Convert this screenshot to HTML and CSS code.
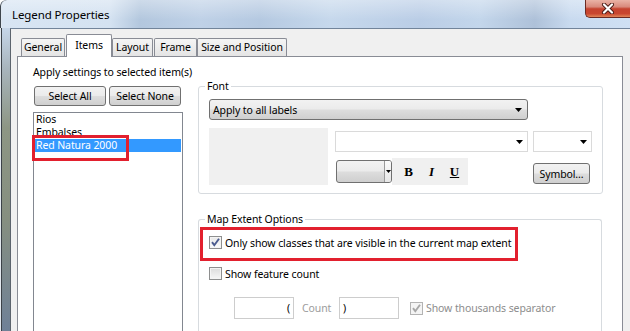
FILE: index.html
```html
<!DOCTYPE html>
<html lang="en">
<head>
    <meta charset="utf-8">
    <link rel="stylesheet" href="styles.css">
    <title>Legend Properties</title>
</head>
<body>
<div class="window">
    <header class="titlebar">
        <span class="title">Legend Properties</span>
        <button class="close">
            <svg width="14" height="11" viewBox="0 0 14 11">
                <path d="M3 1.5 L11 9.5 M11 1.5 L3 9.5" stroke="#4a1c16" stroke-width="4" stroke-linecap="round"/>
                <path d="M3 1.5 L11 9.5 M11 1.5 L3 9.5" stroke="#fff" stroke-width="2.2" stroke-linecap="round"/>
            </svg>
        </button>
    </header>
    <div class="frameBody">
        <div class="frameLeft"></div>
        <div class="client">
            <nav class="tabs">
                <div class="tab tabGeneral">General</div>
                <div class="tab tabItems active">Items</div>
                <div class="tab tabLayout">Layout</div>
                <div class="tab tabFrame">Frame</div>
                <div class="tab tabSize">Size and Position</div>
            </nav>
            <main class="panel">
                <section class="itemsCol">
                    <div class="caption">Apply settings to selected item(s)</div>
                    <div class="btnRow">
                        <button class="btn btnSelect">Select All</button>
                        <button class="btn btnSelect">Select None</button>
                    </div>
                    <div class="list">
                        <div class="listItem">Rios</div>
                        <div class="listItem">Embalses</div>
                        <div class="listItem selected">Red Natura 2000</div>
                        <div class="mark markList"></div>
                    </div>
                </section>

                <section class="propsCol">
                    <fieldset class="group groupFont">
                        <legend>Font</legend>
                        <div class="combo comboApply">
                            <span>Apply to all labels</span>
                            <svg class="arrow" width="7" height="4" viewBox="0 0 7 4"><path d="M0 0h7L3.5 4z"/></svg>
                        </div>
                        <div class="fontRow">
                            <div class="preview"></div>
                            <div class="fontControls">
                                <div class="comboRow">
                                    <div class="field comboName">
                                        <svg class="arrow" width="7" height="4" viewBox="0 0 7 4"><path d="M0 0h7L3.5 4z"/></svg>
                                    </div>
                                    <div class="field comboSize">
                                        <svg class="arrow" width="7" height="4" viewBox="0 0 7 4"><path d="M0 0h7L3.5 4z"/></svg>
                                    </div>
                                </div>
                                <div class="styleRow">
                                    <div class="colorBtn">
                                        <span class="colorFace"></span>
                                        <span class="colorDrop">
                                            <svg width="5" height="3" viewBox="0 0 5 3"><path d="M0 0h5L2.5 3z"/></svg>
                                        </span>
                                    </div>
                                    <div class="biu">
                                        <span class="bold">B</span>
                                        <span class="italic">I</span>
                                        <span class="under">U</span>
                                    </div>
                                    <button class="btn btnSymbol">Symbol...</button>
                                </div>
                            </div>
                        </div>
                    </fieldset>

                    <fieldset class="group groupExtent">
                        <legend>Map Extent Options</legend>
                        <div class="checkRow rowVisible">
                            <span class="check checked">
                                <svg width="11" height="11" viewBox="0 0 11 11"><path d="M2 5.2 L4.3 8.2 L9 1.8" fill="none" stroke="#4b5b8e" stroke-width="1.9"/></svg>
                            </span>
                            <span>Only show classes that are visible in the current map extent</span>
                            <div class="mark markVisible"></div>
                        </div>
                        <div class="checkRow rowCount">
                            <span class="check"></span>
                            <span>Show feature count</span>
                        </div>
                        <div class="countRow">
                            <div class="countBox boxPrefix">(</div>
                            <span class="countLabel">Count</span>
                            <div class="countBox boxSuffix">)</div>
                            <div class="checkRow disabled">
                                <span class="check checked">
                                    <svg width="11" height="11" viewBox="0 0 11 11"><path d="M2 5.2 L4.3 8.2 L9 1.8" fill="none" stroke="#a7a7a7" stroke-width="1.9"/></svg>
                                </span>
                                <span>Show thousands separator</span>
                            </div>
                        </div>
                    </fieldset>
                </section>
            </main>
        </div>
    </div>
</div>
</body>
</html>
```

FILE: styles.css
```css
* { box-sizing: border-box; }
html, body { width: 630px; height: 331px; margin: 0; padding: 0; overflow: hidden; font-family: "Noto Sans", sans-serif; font-size: 10.5px; letter-spacing: -0.1px; color: #000; }
button { font: inherit; letter-spacing: inherit; color: inherit; padding: 0; }

/* window frame */
.window { display: flex; flex-direction: column; height: 331px; }
.titlebar { height: 28px; display: flex; align-items: flex-start; border-top-left-radius: 6px; box-shadow: inset 1px 0 0 #3f464d, inset 2px 0 0 #dfe8f2;
    background: linear-gradient(180deg, rgba(255,255,255,.35), rgba(255,255,255,0) 70%),
                linear-gradient(90deg, #d8e5f3 0, #d4e2f1 110px, #b3c7de 140px, #bfd1e7 200px, #b5c9e1 260px, #c6d8ec 330px, #bacde6 420px, #c3d6eb 480px, #aec1d9 535px, #c8daef 570px, #cfe0f3 630px); }
.title { padding: 7px 0 0 12px; font-size: 11.5px; letter-spacing: -0.1px; line-height: 16px; }
.close { margin-left: auto; width: 45px; height: 18px; display: flex; align-items: center; justify-content: center; border: 1px solid #6b2a22; border-top: none; border-right: none; border-bottom-left-radius: 5px;
    background: linear-gradient(180deg, #eab3a6 0, #d98a7c 40%, #c5432f 52%, #c9462f 80%, #e18556 100%); }

.frameBody { flex: 1; display: flex; min-height: 0; }
.frameLeft { width: 10px; box-shadow: inset 1px 0 0 #e3e9ef, inset 2px 0 0 #3c4248;
    background: linear-gradient(180deg, #c6d6e8 0, #a8b5bd 40px, #8d9684 100px, #868f80 190px, #6f8197 302px); }
.client { flex: 1; min-width: 0; display: flex; flex-direction: column; padding-top: 5px; background: #f0f0f0; border-top: 1px solid #72849a; border-left: 1px solid #5c646d; }

/* tabs */
.tabs { display: flex; align-items: flex-end; height: 22px; padding-left: 10px; position: relative; z-index: 1; }
.tab { height: 18px; line-height: 17px; text-align: center; border: 1px solid #898c95; border-bottom: none; border-radius: 2px 2px 0 0; background: linear-gradient(180deg, #f5f5f5, #e4e4e4); }
.tab.active { height: 23px; line-height: 20px; margin-bottom: -1px; background: #fff; }
.tabGeneral { width: 44px; }
.tabItems { width: 46px; margin-left: 1px; }
.tabLayout { width: 41px; }
.tabFrame { width: 43px; margin-left: 1px; }
.tabSize { width: 90px; margin-left: 0; }

.panel { flex: 1; width: 606px; margin-left: 6px; display: flex; background: #fff; border: 1px solid #898c95; border-bottom: none; min-height: 0; }

/* items column */
.itemsCol { width: 150px; margin-left: 15px; display: flex; flex-direction: column; }
.caption { margin-top: 8px; line-height: 14px; white-space: nowrap; }
.btnRow { display: flex; gap: 3px; margin-top: 7px; padding-left: 1px; }
.btn { height: 20px; border: 1px solid #707070; border-radius: 3px; background: linear-gradient(180deg, #f2f2f2 0, #ebebeb 48%, #dddddd 52%, #cfcfcf 100%); }
.btnSelect { width: 72px; }
.list { position: relative; flex: 1; margin-top: 6px; border: 1px solid #828790; border-bottom: none; background: #fff; }
.listItem { height: 13px; line-height: 13px; padding-left: 2px; white-space: nowrap; }
.listItem.selected { margin-right: 1px; background: #3399ff; color: #fff; }

.mark { position: absolute; border: 3px solid #e2202e; }
.markList { left: -2px; top: 22px; width: 97px; height: 26px; }

/* properties column */
.propsCol { width: 404px; margin-left: 15px; padding-top: 22px; display: flex; flex-direction: column; }
.group { margin: 0; border: 1px solid #d7dbdf; border-radius: 3px; }
.group legend { padding: 0 2px; margin-left: -4px; line-height: 14px; }
.groupFont { padding: 6px 10px 8px 10px; }
.groupExtent { flex: 1; margin-top: 18px; padding: 9px 10px 0 10px; border-bottom: none; border-radius: 3px 3px 0 0; }

.combo { width: 319px; height: 21px; display: flex; align-items: center; justify-content: space-between; padding: 0 5px 0 3px; border: 1px solid #707070; border-radius: 3px; background: linear-gradient(180deg, #f2f2f2 0, #ebebeb 48%, #dddddd 52%, #cfcfcf 100%); }
.arrow { display: block; }

.fontRow { display: flex; margin-top: 8px; }
.preview { width: 119px; height: 57px; background: #f0f0f0; }
.fontControls { flex: 1; margin-left: 7px; padding-top: 3px; display: flex; flex-direction: column; }
.comboRow { display: flex; gap: 5px; }
.field { height: 21px; display: flex; align-items: center; justify-content: flex-end; padding-right: 4px; border: 1px solid #dadada; background: #fff; }
.comboName { width: 193px; }
.comboSize { width: 59px; }

.styleRow { display: flex; align-items: center; height: 27px; margin-top: 6px; }
.colorBtn { width: 56px; height: 23px; margin-left: 1px; display: flex; border: 1px solid #707070; border-radius: 3px; overflow: hidden; background: linear-gradient(180deg, #f2f2f2 0, #ebebeb 48%, #dddddd 52%, #cfcfcf 100%); }
.colorFace { flex: 1; border-right: 1px solid #9a9a9a; }
.colorDrop { width: 6px; display: flex; align-items: center; justify-content: center; background: linear-gradient(180deg, #fbfbfb, #e6e6e6); }
.biu { width: 76px; height: 27px; display: flex; padding-left: 5px; align-items: center; background: #f0f0f0; font-family: "Liberation Serif", serif; font-size: 13px; font-weight: bold; letter-spacing: 0; }
.biu span { width: 23px; text-align: center; }
.italic { font-style: italic; }
.under { text-decoration: underline; }
.btnSymbol { width: 57px; height: 21px; margin-left: auto; margin-right: 2px; align-self: flex-end; margin-bottom: 1px; }

.checkRow { position: relative; display: flex; align-items: center; gap: 3px; height: 15px; white-space: nowrap; }
.rowCount { margin-top: 16px; }
.check { width: 13px; height: 13px; flex: none; display: flex; align-items: center; justify-content: center; border: 1px solid #8e8f8f; background: linear-gradient(180deg, #dcdcdc, #f6f6f6); box-shadow: inset 0 0 0 1px #f4f4f4; }
.check.checked { background: linear-gradient(180deg, #e8e8e8, #fbfbfb); }
.markVisible { left: -9px; top: -8px; width: 318px; height: 34px; }

.countRow { display: flex; align-items: center; height: 22px; margin-top: 16px; padding-left: 25px; }
.countBox { width: 60px; height: 22px; line-height: 20px; border: 1px solid #cdcdcd; background: #fff; padding: 0 3px; }
.boxPrefix { text-align: right; }
.countLabel { width: 45px; padding-left: 8px; color: #9c9c9c; }
.disabled { margin-left: 11px; color: #8d8d8d; }
.disabled .check { border-color: #b3b3b3; background: #f4f4f4; }
```
